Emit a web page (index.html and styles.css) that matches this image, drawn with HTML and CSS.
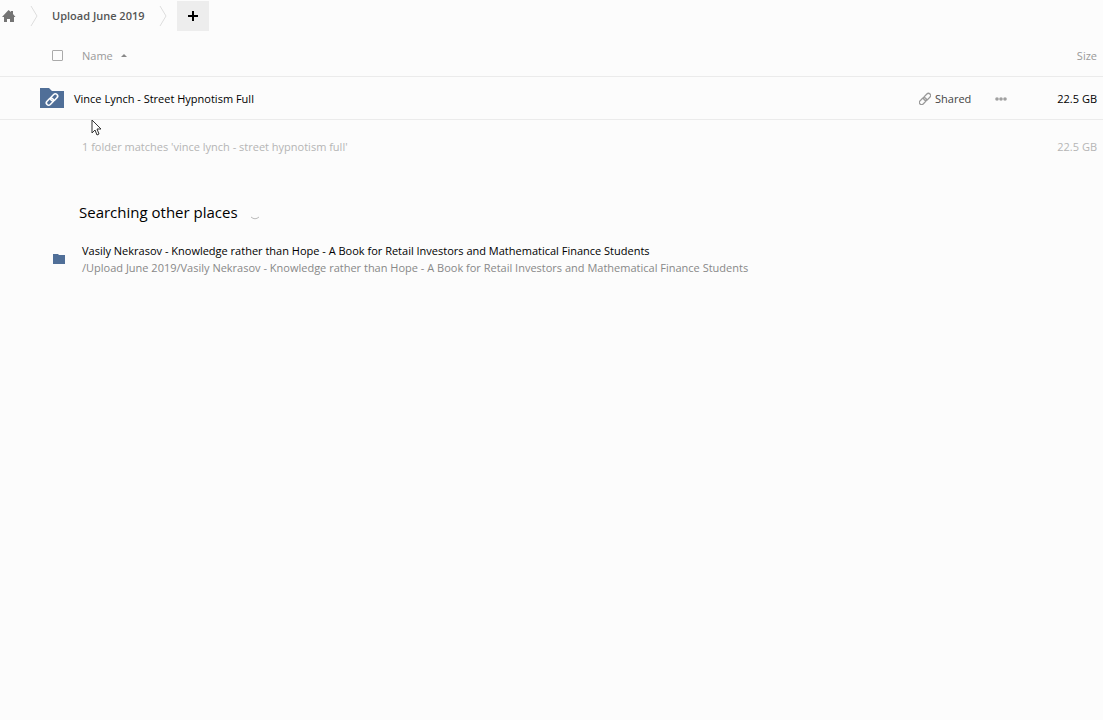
FILE: index.html
```html
<!DOCTYPE html>
<html lang="en">

<head>
    <meta charset="UTF-8">
    <meta name="viewport" content="width=device-width, initial-scale=1.0">
    <title>Files</title>
    <link rel="stylesheet" href="styles.css">
</head>

<body>
    <header class="controls">
        <nav class="breadcrumb" aria-label="Breadcrumb">
            <a class="home" href="#" aria-label="Home">
                <svg width="14" height="12" viewBox="0 0 14 12">
                    <path d="M6.500 0L9 2V1h2v3l2.500 3H12v5H8V9H5v3H2V7H0z" fill="#747474"/>
                </svg>
            </a>
            <svg class="separator" width="8" height="22" viewBox="0 0 8 22">
                <path d="M1 1l6 10-6 10" fill="none" stroke="#dedede"/>
            </svg>
            <a class="crumb" href="#">Upload June 2019</a>
            <svg class="separator" width="8" height="22" viewBox="0 0 8 22">
                <path d="M1 1l6 10-6 10" fill="none" stroke="#dedede"/>
            </svg>
        </nav>
        <button class="new-button" type="button" aria-label="New">
            <svg width="10" height="10" viewBox="0 0 10 10">
                <path d="M5 0v10M0 5h10" stroke="#000" stroke-width="2"/>
            </svg>
        </button>
    </header>

    <main>
        <table class="file-list">
            <thead>
                <tr>
                    <th class="name-column">
                        <div class="name-header">
                            <input type="checkbox" id="selectAll" aria-label="Select all">
                            <a class="sort" href="#">Name
                                <svg width="6" height="3" viewBox="0 0 6 3">
                                    <path d="M3 0l3 3H0z" fill="#888"/>
                                </svg>
                            </a>
                        </div>
                    </th>
                    <th class="actions-column"></th>
                    <th class="size-column"><a href="#">Size</a></th>
                </tr>
            </thead>
            <tbody>
                <tr>
                    <td>
                        <a class="file-name" href="#">
                            <svg width="24" height="20" viewBox="0 0 24 20">
                                <path d="M0 0h9l3 3h12v17H0z" fill="#506f98"/>
                                <g transform="translate(12 11.500) rotate(-45)" fill="none" stroke="#fff" stroke-width="1.6">
                                    <rect x="-7" y="-2.300" width="8" height="4.600" rx="2.300"/>
                                    <rect x="-1" y="-2.300" width="8" height="4.600" rx="2.300"/>
                                </g>
                            </svg>
                            <span>Vince Lynch - Street Hypnotism Full</span>
                        </a>
                    </td>
                    <td>
                        <div class="file-actions">
                            <a class="shared" href="#">
                                <svg width="12" height="14" viewBox="0 0 12 14">
                                    <g transform="translate(6 8) rotate(-45)" fill="none" stroke="#999" stroke-width="1.3">
                                        <rect x="-7" y="-2.200" width="8" height="4.400" rx="2.200"/>
                                        <rect x="-1" y="-2.200" width="8" height="4.400" rx="2.200"/>
                                    </g>
                                </svg>
                                <span>Shared</span>
                            </a>
                            <button class="more" type="button" aria-label="More actions">
                                <svg width="12" height="6" viewBox="0 0 12 6" fill="#a0a0a0">
                                    <circle cx="2" cy="4" r="1.800"/>
                                    <circle cx="6" cy="4" r="1.800"/>
                                    <circle cx="10" cy="4" r="1.800"/>
                                </svg>
                            </button>
                        </div>
                    </td>
                    <td class="size">22.5 GB</td>
                </tr>
            </tbody>
            <tfoot>
                <tr>
                    <td class="summary" colspan="2">1 folder matches 'vince lynch - street hypnotism full'</td>
                    <td class="size">22.5 GB</td>
                </tr>
            </tfoot>
        </table>

        <section class="search-results">
            <h2>
                Searching other places
                <svg width="10" height="10" viewBox="0 0 10 10">
                    <path d="M1 7q4 3.500 8 0" fill="none" stroke="#bbb"/>
                </svg>
            </h2>
            <a class="result" href="#">
                <svg width="12" height="10" viewBox="0 0 12 10">
                    <path d="M0 0h5l1 1h6v9H0z" fill="#506f98"/>
                </svg>
                <div>
                    <div class="result-name">Vasily Nekrasov - Knowledge rather than Hope - A Book for Retail Investors and Mathematical Finance Students</div>
                    <div class="result-path">/Upload June 2019/Vasily Nekrasov - Knowledge rather than Hope - A Book for Retail Investors and Mathematical Finance Students</div>
                </div>
            </a>
        </section>
    </main>

    <svg class="cursor" width="11" height="17" viewBox="0 0 11 17">
        <path d="M1 1v13l3-3 2 5 2-1-2-5h4z" fill="#fff" stroke="#333"/>
    </svg>
</body>

</html>
```

FILE: styles.css
```css
body {
    font-family: 'Open Sans', sans-serif;
    font-size: 11px;
    line-height: 17px;
    margin: 0;
    color: #000;
    background-color: #fcfcfc;
}

a {
    color: inherit;
    text-decoration: none;
}

svg {
    display: block;
    flex: none;
}

button {
    border: none;
    padding: 0;
    cursor: pointer;
}

.controls {
    display: flex;
    gap: 10px;
    height: 34px;
}

.breadcrumb {
    display: flex;
    align-items: center;
    gap: 14px;
    height: 31px;
    padding-left: 2px;
}

.crumb {
    font-weight: 600;
    color: #555;
}

.new-button {
    display: flex;
    align-items: center;
    justify-content: center;
    width: 32px;
    height: 30px;
    margin-top: 1px;
    background-color: #ededed;
}

.file-list {
    width: 100%;
    border-collapse: collapse;
}

.file-list th,
.file-list td {
    height: 42px;
    padding: 0;
    border-bottom: 1px solid #ebebeb;
    text-align: left;
}

.file-list th {
    font-weight: normal;
    color: #999;
}

.name-header {
    display: flex;
    align-items: center;
    gap: 19px;
    padding-left: 52px;
}

.name-header input {
    appearance: none;
    box-sizing: border-box;
    width: 11px;
    height: 11px;
    margin: 0;
    border: 1px solid #aaa;
    border-radius: 1px;
}

.sort {
    display: flex;
    align-items: center;
    gap: 8px;
}

.actions-column {
    width: 114px;
}

.file-list .size-column,
.file-list .size {
    width: 64px;
    padding-right: 6px;
    text-align: right;
}

.file-name {
    display: flex;
    align-items: center;
    gap: 10px;
    padding-left: 40px;
}

.file-actions {
    display: flex;
    align-items: center;
    gap: 24px;
}

.shared {
    display: flex;
    align-items: center;
    gap: 4px;
    color: #444;
}

.more {
    background: none;
}

.file-list tfoot td {
    height: 52px;
    border-bottom: none;
    color: #b5b5b5;
}

.file-list .summary {
    padding-left: 82px;
}

.search-results {
    padding-top: 28px;
}

.search-results h2 {
    display: flex;
    align-items: center;
    gap: 12px;
    margin: 0 0 17px 79px;
    font-size: 15px;
    font-weight: normal;
    line-height: 25px;
}

.search-results h2 svg {
    margin-top: 4px;
}

.result {
    display: flex;
    align-items: center;
    gap: 17px;
    padding-left: 53px;
}

.result-path {
    color: #888;
}

.cursor {
    position: absolute;
    top: 119px;
    left: 91px;
    pointer-events: none;
}
```
